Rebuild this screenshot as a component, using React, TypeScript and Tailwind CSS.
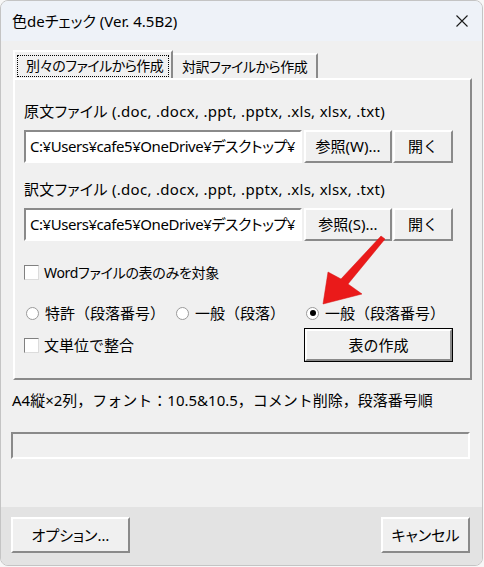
import React from "react";

const font = "[font-family:'Noto_Sans','Noto_Sans_CJK_JP',sans-serif]";
const palt = "[font-feature-settings:'palt']";

function Raised({ children, className = "" }: { children: React.ReactNode; className?: string }) {
  return (
    <div
      className={`flex items-center justify-center whitespace-nowrap bg-[#f0f0f0] border-2 border-t-white border-l-white border-r-[#8a8a8a] border-b-[#8a8a8a] ${className}`}
    >
      {children}
    </div>
  );
}

function Sunken({ children, className = "" }: { children?: React.ReactNode; className?: string }) {
  return (
    <div
      className={`flex items-center border-2 border-t-[#8a8a8a] border-l-[#8a8a8a] border-r-white border-b-white ${className}`}
    >
      {children}
    </div>
  );
}

function Check({ label, className = "" }: { label: string; className?: string }) {
  return (
    <div className="flex items-center gap-[5px]">
      <div className="w-[15px] h-[15px] bg-white border border-t-[#808080] border-l-[#808080] border-r-[#dcdcdc] border-b-[#dcdcdc]" />
      <span className={`whitespace-nowrap ${className}`}>{label}</span>
    </div>
  );
}

function Radio({ label, on, width }: { label: string; on?: boolean; width: string }) {
  return (
    <div className={`flex items-center gap-[6px] ${width}`}>
      <div className="w-[13px] h-[13px] rounded-full bg-white border border-[#9a9a9a] flex items-center justify-center">
        {on && <div className="w-[6px] h-[6px] rounded-full bg-black" />}
      </div>
      <span className="whitespace-nowrap">{label}</span>
    </div>
  );
}

function FileRow({ label, browse }: { label: string; browse: string }) {
  const path = "C:¥Users¥cafe5¥OneDrive¥デスクトップ¥";
  return (
    <div className="flex flex-col">
      <div className={`h-[20px] flex items-center tracking-[0.3px] whitespace-nowrap ${palt}`}>{label}</div>
      <div className="flex mt-[9px] h-[33px]">
        <Sunken className={`w-[278px] bg-white pl-[4px] overflow-hidden whitespace-nowrap tracking-[-0.45px] ${palt}`}>{path}</Sunken>
        <Raised className={`w-[88px] ml-[2px] ${palt}`}>{browse}</Raised>
        <Raised className="w-[60px] ml-[1px]">開く</Raised>
      </div>
    </div>
  );
}

export default function App() {
  return (
    <div className={`relative w-[484px] h-[567px] bg-[#f7f7f7] text-[15px] text-black ${font}`}>
      <div className="w-[483px] h-[566px] rounded-[8px] border border-[#c4c4c4] overflow-hidden flex flex-col bg-[#f0f0f0]">
        {/* title bar */}
        <div className="h-[40px] shrink-0 bg-[#eef2f8] flex items-center justify-between pl-[11px] pr-[14px]">
          <span className={palt}>色deチェック (Ver. 4.5B2)</span>
          <svg width="12" height="12" viewBox="0 0 12 12">
            <path d="M0.5 0.5 L11.5 11.5 M11.5 0.5 L0.5 11.5" stroke="#1a1a1a" strokeWidth="1.1" />
          </svg>
        </div>

        {/* tabs */}
        <div className={`flex items-end ml-[12px] mt-[9px] h-[28px] whitespace-nowrap text-[14px] tracking-[-0.5px] ${palt}`}>
          <div className="w-[160px] h-[28px] bg-[#f0f0f0] border-t-2 border-l-2 border-t-white border-l-white border-r-2 border-r-[#8a8a8a] flex items-center px-[2px] pt-[1px]">
            <div className="w-full h-[22px] border border-dotted border-black flex items-center pl-[8px]">別々のファイルから作成</div>
          </div>
          <div className="w-[145px] h-[25px] border-t-2 border-t-white border-r-2 border-r-[#8a8a8a] flex items-center pl-[9px]">
            対訳ファイルから作成
          </div>
        </div>

        {/* panel */}
        <div className="ml-[12px] w-[459px] h-[302px] border-2 border-t-white border-l-white border-r-[#8a8a8a] border-b-[#8a8a8a] pl-[9px] pt-[21px]">
          <FileRow label="原文ファイル (.doc, .docx, .ppt, .pptx, .xls, xlsx, .txt)" browse="参照(W)..." />
          <div className="mt-[16px]">
            <FileRow label="訳文ファイル (.doc, .docx, .ppt, .pptx, .xls, xlsx, .txt)" browse="参照(S)..." />
          </div>
          <div className="mt-[21px] h-[20px] flex items-center">
            <Check label="Wordファイルの表のみを対象" className={`text-[14px] tracking-[-0.3px] ${palt}`} />
          </div>
          <div className="mt-[21px] h-[20px] flex items-center pl-[2px]">
            <Radio label="特許（段落番号）" width="w-[150px]" />
            <Radio label="一般（段落）" width="w-[130px]" />
            <Radio label="一般（段落番号）" on width="w-[150px]" />
          </div>
          <div className="mt-[5px] flex items-center">
            <div className="w-[280px]">
              <Check label="文単位で整合" />
            </div>
            <div className="w-[149px] h-[34px] border border-black">
              <Raised className="w-full h-full">表の作成</Raised>
            </div>
          </div>
        </div>

        {/* status */}
        <div className="h-[20px] mt-[10px] ml-[11px] flex items-center whitespace-nowrap">A4縦×2列，フォント：10.5&amp;10.5，コメント削除，段落番号順</div>
        <Sunken className="ml-[10px] mt-[22px] w-[459px] h-[27px] bg-[#f0f0f0]" />

        {/* footer */}
        <div className={`mt-auto h-[58px] bg-[#e3e3e3] flex items-start justify-between px-[10px] pt-[10px] ${palt}`}>
          <Raised className="w-[119px] h-[36px]">オプション…</Raised>
          <Raised className="w-[89px] h-[36px] mr-[2px]">キャンセル</Raised>
        </div>
      </div>

      {/* red arrow overlay */}
      <svg className="absolute left-0 top-0 pointer-events-none" width="484" height="567">
        <polygon
          points="385,239 348,284 362,294 323,304 328,272 341,279 381,236"
          fill="#ea1a1a"
          stroke="#d61010"
          strokeWidth="0.5"
          strokeLinejoin="round"
        />
      </svg>
    </div>
  );
}
